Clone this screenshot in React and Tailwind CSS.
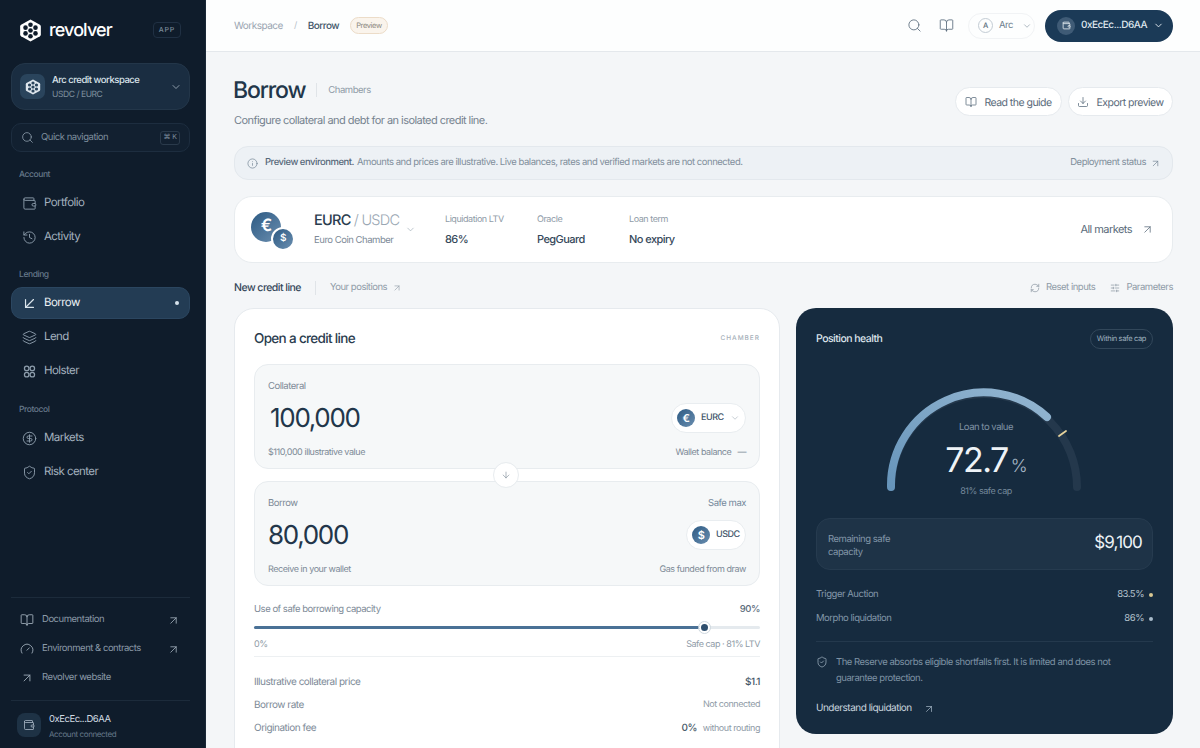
import React from 'react';
import {
  ArrowDown, ArrowDownLeft, ArrowUpRight, BookOpen, ChevronDown, CircleDollarSign, Download,
  Gauge, History, Info, Layers, RefreshCw, Search, ShieldCheck, SlidersHorizontal, Wallet,
} from 'lucide-react';

const font = { fontFamily: 'Inter, "Noto Sans", sans-serif' };

function Logo({ size = 24, fill = '#fff', hole = '#0f1c2b' }) {
  const holes = [[12, 12], [12, 6], [12, 18], [6.8, 9], [17.2, 9], [6.8, 15], [17.2, 15]];
  return (
    <svg width={size} height={size} viewBox="0 0 24 24">
      <path d="M12 .6 21.8 6a2 2 0 0 1 1 1.7v8.6a2 2 0 0 1-1 1.7L12 23.4 2.2 18a2 2 0 0 1-1-1.7V7.7a2 2 0 0 1 1-1.7Z" fill={fill} />
      {holes.map(([x, y]) => (
        <circle key={`${x}-${y}`} cx={x} cy={y} r="2.4" fill={hole} />
      ))}
    </svg>
  );
}

function HoneyGrid({ className }) {
  return (
    <svg className={className} viewBox="0 0 24 24" fill="none" stroke="currentColor" strokeWidth="2">
      <circle cx="7.5" cy="7" r="3.6" />
      <circle cx="16.5" cy="7" r="3.6" />
      <circle cx="7.5" cy="17" r="3.6" />
      <circle cx="16.5" cy="17" r="3.6" />
    </svg>
  );
}

function NavItem({ icon: Icon, label, active }) {
  return (
    <div className={`flex items-center h-[32px] rounded-[11px] pl-[10px] pr-[9px] ml-[11px] mr-[15px] border ${active ? 'bg-[#233c54] border-[#2b4660] text-[#eef3f7]' : 'border-transparent text-[#a4b2bf]'}`}>
      <span className="w-[23px] flex"><Icon className={active ? 'w-[19px] h-[19px] -ml-[2px] text-[#dbe5ec] shrink-0' : 'w-[15px] h-[15px] text-[#8c9cab]'} strokeWidth={1.5} /></span>
      <span className="text-[11.5px] font-normal ml-[-1px]">{label}</span>
      {active && <span className="ml-auto mr-[1px] w-[4px] h-[4px] rounded-full bg-[#d7e3ec]" />}
    </div>
  );
}

function FootLink({ icon: Icon, label, arrow }) {
  return (
    <div className="flex items-center h-[29px] pl-[20px] pr-[25px] pt-[1px] text-[#8b9aa8]">
      <Icon className="w-[14px] h-[14px] text-[#a2b0bd]" strokeWidth={1.5} />
      <span className="ml-[8px] text-[9.5px] font-normal">{label}</span>
      {arrow && <ArrowUpRight className="ml-auto w-[13px] h-[13px] text-[#a2b0bd]" strokeWidth={1.5} />}
    </div>
  );
}

function Sidebar() {
  return (
    <aside className="w-[206px] shrink-0 h-full bg-[#0f1c2b] border-r border-[#1a2837] flex flex-col">
      <div className="flex items-center h-[30px] mt-[15px] pl-[19px] pr-[24px]">
        <Logo size={23} />
        <span className="ml-[7px] text-[18px] font-medium text-white">revolver</span>
        <span className="ml-auto border border-[#203043] rounded-[4px] px-[5px] h-[16px] flex items-center text-[7px] tracking-[0.8px]! text-[#7b8b9a] font-medium">APP</span>
      </div>
      <div className="ml-[11px] mr-[15px] mt-[18px] h-[47px] rounded-[14px] bg-[#1a2d41] border border-[#233649] flex items-center pl-[8px] pr-[7px]">
        <span className="w-[25px] h-[25px] rounded-[7px] bg-[#2a445c] flex items-center justify-center"><Logo size={16} fill="#dfe7ee" hole="#2a445c" /></span>
        <div className="ml-[7px] pt-[2px] flex-1 leading-none">
          <div className="text-[9.5px] font-medium text-[#dbe4eb] mb-[6px]">Arc credit workspace</div>
          <div className="text-[8.5px] text-[#7f909f]">USDC / EURC</div>
        </div>
        <ChevronDown className="w-[12px] h-[12px] text-[#a7b5c2]" strokeWidth={1.6} />
      </div>
      <div className="ml-[11px] mr-[15px] mt-[13px] h-[29px] rounded-[10px] border border-[#1d2d3f] bg-[#122030] flex items-center pl-[9px] pr-[9px]">
        <Search className="w-[13px] h-[13px] text-[#8c9cab]" strokeWidth={1.5} />
        <span className="ml-[7px] pt-[2px] text-[9.5px] text-[#7f8f9e]">Quick navigation</span>
        <span className="ml-auto h-[14px] w-[20px] rounded-[3px] border border-[#2a3a4b] flex items-center justify-center gap-[2px] text-[7px] text-[#7f8f9e]"><span>⌘</span><span>K</span></span>
      </div>

      <div className="pl-[19px] mt-[18px] mb-[7px] text-[8.5px] leading-[10px] font-medium text-[#66788a]">Account</div>
      <div className="flex flex-col gap-[2px]">
        <NavItem icon={Wallet} label="Portfolio" />
        <NavItem icon={History} label="Activity" />
      </div>
      <div className="pl-[19px] mt-[17px] mb-[7px] text-[8.5px] leading-[10px] font-medium text-[#66788a]">Lending</div>
      <div className="flex flex-col gap-[2px]">
        <NavItem icon={ArrowDownLeft} label="Borrow" active />
        <NavItem icon={Layers} label="Lend" />
        <NavItem icon={HoneyGrid} label="Holster" />
      </div>
      <div className="pl-[19px] mt-[18px] mb-[7px] text-[8.5px] leading-[10px] font-medium text-[#66788a]">Protocol</div>
      <div className="flex flex-col gap-[2px]">
        <NavItem icon={CircleDollarSign} label="Markets" />
        <NavItem icon={ShieldCheck} label="Risk center" />
      </div>

      <div className="mt-auto ml-[11px] mr-[15px] border-t border-[#1c2b3b]" />
      <div className="pt-[7px] pb-[8px]">
        <FootLink icon={BookOpen} label="Documentation" arrow />
        <FootLink icon={Gauge} label="Environment & contracts" arrow />
        <FootLink icon={ArrowUpRight} label="Revolver website" />
      </div>
      <div className="ml-[11px] mr-[15px] border-t border-[#1c2b3b]" />
      <div className="flex items-center h-[47px] pl-[17px]">
        <span className="w-[24px] h-[24px] rounded-[8px] bg-[#1e3245] flex items-center justify-center"><Wallet className="w-[12px] h-[12px] text-[#a9b8c6]" strokeWidth={1.6} /></span>
        <div className="ml-[8px] pt-[4px] leading-none">
          <div className="text-[9.5px] font-normal text-[#d0dae2] mb-[6px]">0xEcEc...D6AA</div>
          <div className="text-[8px] text-[#66788a]">Account connected</div>
        </div>
      </div>
    </aside>
  );
}

function Header() {
  return (
    <header className="h-[52px] shrink-0 bg-[#fdfefe] border-b border-[#e4e8ec] flex items-center pl-[28px] pr-[27px]">
      <span className="pt-[1px] text-[10px] text-[#9aa5b1]">Workspace</span>
      <span className="mx-[11px] text-[9px] text-[#b6bfc8]">/</span>
      <span className="pt-[1px] text-[10px] font-medium text-[#43566a]">Borrow</span>
      <span className="ml-[11px] h-[17px] px-[5px] flex items-center rounded-full border border-[#ecdcc8] bg-[#faf4ec] text-[7.5px] text-[#8d8a80]">Preview</span>
      <Search className="ml-auto w-[15px] h-[15px] text-[#5f7080]" strokeWidth={1.4} />
      <BookOpen className="ml-[17px] w-[15px] h-[15px] text-[#5f7080]" strokeWidth={1.4} />
      <div className="ml-[14px] h-[26px] w-[67px] rounded-full border border-[#f1f3f5] flex items-center">
        <span className="ml-[9px] w-[15px] h-[15px] rounded-full border border-[#c3ccd4] flex items-center justify-center text-[7.5px] font-medium text-[#5f7080] shrink-0">A</span>
        <span className="ml-[6px] pt-[2px] text-[9.5px] text-[#6f7f8e]">Arc</span>
        <ChevronDown className="ml-[9px] w-[10px] h-[10px] text-[#8a98a5] shrink-0" strokeWidth={1.6} />
      </div>
      <div className="ml-[10px] w-[128px] h-[32px] rounded-full bg-[#1b3a57] flex items-center pl-[12px]">
        <span className="w-[18px] h-[18px] rounded-full bg-[#3f5b76] flex items-center justify-center"><Wallet className="w-[9px] h-[9px] text-[#e4ebf1]" strokeWidth={2.2} /></span>
        <span className="ml-[6px] text-[10px] font-medium text-[#dfe7ee]">0xEcEc...D6AA</span>
        <ChevronDown className="ml-[6px] w-[11px] h-[11px] text-[#e4ebf1]" strokeWidth={2} />
      </div>
    </header>
  );
}

function Pill({ icon: Icon, label, className }) {
  return (
    <div className={`h-[29px] rounded-full bg-white border border-[#e6eaee] flex items-center justify-center ${className}`}>
      <Icon className="w-[12px] h-[12px] text-[#566879]" strokeWidth={1.5} />
      <span className="ml-[7px] pt-[2px] text-[10.5px] font-normal text-[#596a7a]">{label}</span>
    </div>
  );
}

function Coin({ symbol, size = 18, text = 'text-[11px]', className = '' }) {
  return (
    <span
      className={`rounded-full bg-gradient-to-br from-[#2c5a83] to-[#6b8fb0] flex items-center justify-center text-white font-semibold shrink-0 ${text} ${className}`}
      style={{ width: size, height: size }}
    >
      {symbol}
    </span>
  );
}

function MarketStat({ label, value, className }) {
  return (
    <div className={`leading-none ${className}`}>
      <div className="text-[9px] text-[#8f9ba7] mb-[10px]">{label}</div>
      <div className="text-[11px] font-medium text-[#35485a]">{value}</div>
    </div>
  );
}

function TokenPill({ symbol, label, chevron, className }) {
  return (
    <div className={`h-[30px] rounded-full bg-white border border-[#e9edf0] flex items-center pl-[5px] ${className}`}>
      <Coin symbol={symbol} size={18} text="text-[11px]" />
      <span className="ml-[6px] text-[9px] font-medium text-[#43566a]">{label}</span>
      {chevron && <ChevronDown className="ml-[6px] w-[10px] h-[10px] text-[#a5b0ba]" strokeWidth={1.5} />}
    </div>
  );
}

function AssetBox({ label, right, amount, amountClass, token, footLeft, footRight }) {
  return (
    <div className="h-[105px] rounded-[14px] bg-[#f6f8f9] border border-[#e8ecef] px-[13px] pt-[16px]">
      <div className="flex justify-between leading-[12px] text-[9.5px] text-[#7d8a97]">
        <span>{label}</span>
        {right}
      </div>
      <div className="flex items-center justify-between mt-[6px] h-[38px]">
        <span className={`text-[26px] font-normal text-[#22364a] ${amountClass}`}>{amount}</span>
        {token}
      </div>
      <div className="flex justify-between mt-[10px] leading-[12px] text-[9px] text-[#7d8a97]">
        <span>{footLeft}</span>
        {footRight}
      </div>
    </div>
  );
}

function BorrowCard() {
  return (
    <section className="bg-white border border-[#e6eaee] rounded-t-[20px] px-[19px] pt-[22px] h-[460px]">
      <div className="flex items-center justify-between h-[16px]">
        <h2 className="text-[13.5px] font-medium text-[#2a3c4e]">Open a credit line</h2>
        <span className="text-[6.5px] font-medium tracking-[1px]! text-[#a5afb9]">CHAMBER</span>
      </div>
      <div className="mt-[17px] relative flex flex-col gap-[12px]">
        <AssetBox
          label="Collateral"
          amount="100,000"
          amountClass="ml-[2px]"
          token={<TokenPill symbol="€" label="EURC" chevron className="w-[75px]" />}
          footLeft="$110,000 illustrative value"
          footRight={<span>Wallet balance <span className="ml-[4px]">—</span></span>}
        />
        <AssetBox
          label="Borrow"
          right={<span className="text-[#74889b]">Safe max</span>}
          amount="80,000"
          token={<TokenPill symbol="$" label="USDC" className="w-[60px]" />}
          footLeft="Receive in your wallet"
          footRight={<span>Gas funded from draw</span>}
        />
        <span className="absolute left-[240px] top-[99px] w-[24px] h-[24px] rounded-full bg-white border-[3px] border-white outline outline-1 outline-[#e8ecef] flex items-center justify-center">
          <ArrowDown className="w-[10px] h-[10px] text-[#7d8a97]" strokeWidth={1.5} />
        </span>
      </div>

      <div className="mt-[18px] flex justify-between leading-[12px] text-[9.5px] text-[#7d8a97]">
        <span>Use of safe borrowing capacity</span>
        <span className="font-medium text-[#5c6c7b]">90%</span>
      </div>
      <div className="relative mt-[10px] h-[3px] rounded-full bg-[#e5eaee]">
        <div className="h-full rounded-full bg-[#4a7196]" style={{ width: '90%' }} />
        <span className="absolute left-[445px] top-[-4px] w-[11px] h-[11px] rounded-full bg-[#2f4f6e] border-[2px] border-white outline outline-1 outline-[#cfd8df]" />
      </div>
      <div className="mt-[10px] flex justify-between leading-[12px] text-[9px] text-[#8f9ba7]">
        <span>0%</span>
        <span>Safe cap · 81% LTV</span>
      </div>
      <div className="mt-[5px] border-t border-[#edf0f2]" />
      <div className="mt-[19px] flex flex-col gap-[11px] text-[10px] leading-[12px] text-[#7d8a97]">
        <div className="flex justify-between">
          <span>Illustrative collateral price</span>
          <span className="font-medium text-[#475868]">$1.1</span>
        </div>
        <div className="flex justify-between">
          <span>Borrow rate</span>
          <span className="text-[9px] text-[#8f9ba7]">Not connected</span>
        </div>
        <div className="flex justify-between">
          <span>Origination fee</span>
          <span className="text-[9px] text-[#8f9ba7]"><span className="text-[10px] font-medium text-[#475868] mr-[6px]">0%</span>without routing</span>
        </div>
      </div>
    </section>
  );
}

function GaugeArc() {
  return (
    <svg width="204" height="112" viewBox="0 0 204 112" className="block">
      <defs>
        <linearGradient id="arc" x1="0" x2="1" y1="1" y2="0">
          <stop offset="0" stopColor="#6795bb" />
          <stop offset="1" stopColor="#94b6d1" />
        </linearGradient>
      </defs>
      <path d="M7 102 A 93 93 0 0 1 193 102" fill="none" stroke="#24384c" strokeWidth="8" strokeLinecap="round" />
      <path d="M7 102 A 93 93 0 0 1 163 32" fill="none" stroke="url(#arc)" strokeWidth="8" strokeLinecap="round" />
      <line x1="175" y1="51" x2="182" y2="46" stroke="#e6d39c" strokeWidth="1.8" strokeLinecap="round" />
    </svg>
  );
}

function HealthPanel() {
  return (
    <section className="h-[426px] rounded-[20px] bg-[#162b3f] px-[20px] pt-[21px]">
      <div className="flex items-center justify-between h-[20px]">
        <h3 className="text-[10.5px] font-medium text-[#dde5ec]">Position health</h3>
        <span className="h-[20px] px-[6px] flex items-center rounded-full border border-[#32475a] text-[7.5px] text-[#9fb0bf]">Within safe cap</span>
      </div>
      <div className="relative mt-[36px] w-[204px] h-[112px] ml-[68px]">
        <GaugeArc />
        <div className="absolute inset-x-0 top-[38px] flex flex-col items-center leading-none">
          <span className="text-[9.5px] text-[#8093a5]">Loan to value</span>
          <span className="mt-[11px] flex items-baseline text-[#eef3f7]">
            <span className="text-[34px] font-normal tracking-[-1.5px]!">72.7</span>
            <span className="ml-[3px] text-[18px] font-light text-[#a9bac8]">%</span>
          </span>
          <span className="mt-[9px] text-[9px] text-[#75899b]">81% safe cap</span>
        </div>
      </div>
      <div className="mt-[21px] h-[52px] rounded-[14px] bg-[#1e3347] border border-[#263b4f] flex items-center justify-between pl-[11px] pr-[10px]">
        <span className="w-[80px] pt-[3px] text-[9.5px] leading-[13px] text-[#8397a9]">Remaining safe capacity</span>
        <span className="text-[17px] font-normal text-[#eef3f7]">$9,100</span>
      </div>
      <div className="mt-[19px] flex flex-col gap-[12px] text-[9.5px] leading-[12px] text-[#8397a9]">
        <div className="flex items-center justify-between">
          <span>Trigger Auction</span>
          <span className="flex items-center text-[#b4c2ce]">83.5%<span className="ml-[5px] w-[4px] h-[4px] rounded-full bg-[#d9c893]" /></span>
        </div>
        <div className="flex items-center justify-between">
          <span>Morpho liquidation</span>
          <span className="flex items-center text-[#b4c2ce]">86%<span className="ml-[5px] w-[4px] h-[4px] rounded-full bg-[#a9bccb]" /></span>
        </div>
      </div>
      <div className="mt-[16px] border-t border-[#24394d]" />
      <div className="mt-[13px] flex">
        <ShieldCheck className="mt-[1px] w-[12px] h-[12px] text-[#9fb0bf] shrink-0" strokeWidth={1.5} />
        <p className="ml-[8px] text-[9.5px] leading-[16px] text-[#7f93a5] w-[300px]">The Reserve absorbs eligible shortfalls first. It is limited and does not guarantee protection.</p>
      </div>
      <div className="mt-[14px] flex items-center text-[10px] font-normal text-[#c8d4de]">
        Understand liquidation
        <ArrowUpRight className="ml-[11px] w-[12px] h-[12px] text-[#a9bac8]" strokeWidth={1.4} />
      </div>
    </section>
  );
}

export default function App() {
  return (
    <div className="h-screen w-full overflow-hidden flex bg-[#f4f6f8] antialiased [text-rendering:geometricPrecision] [&_*]:tracking-[-0.05em]" style={font}>
      <Sidebar />
      <main className="flex-1 min-w-0 flex flex-col h-full overflow-hidden">
        <Header />
        <div className="pl-[28px] pr-[27px]">
          <div className="flex justify-between h-[94px]">
            <div className="pt-[24px]">
              <div className="flex items-center h-[28px]">
                <h1 className="text-[23px] font-medium text-[#22364a] -ml-[1px]">Borrow</h1>
                <span className="mx-[11px] h-[14px] border-l border-[#e0e4e8]" />
                <span className="pt-[2px] text-[9.5px] text-[#8f9ba7]">Chambers</span>
              </div>
              <p className="mt-[8px] text-[11px] text-[#74828f]">Configure collateral and debt for an isolated credit line.</p>
            </div>
            <div className="pt-[35px] flex gap-[6px]">
              <Pill icon={BookOpen} label="Read the guide" className="w-[107px]" />
              <Pill icon={Download} label="Export preview" className="w-[105px]" />
            </div>
          </div>

          <div className="h-[34px] rounded-[14px] bg-[#edf1f5] border border-[#e3e8ed] flex items-center pl-[12px] pr-[11px] text-[9.5px]">
            <Info className="w-[11px] h-[11px] text-[#728393]" strokeWidth={1.5} />
            <span className="ml-[7px] pt-[1px] font-medium text-[#566879]">Preview environment.</span>
            <span className="ml-[3px] pt-[1px] text-[#808e9b]">Amounts and prices are illustrative. Live balances, rates and verified markets are not connected.</span>
            <span className="ml-auto pt-[1px] text-[#808e9b]">Deployment status</span>
            <ArrowUpRight className="ml-[4px] w-[11px] h-[11px] text-[#728393]" strokeWidth={1.5} />
          </div>

          <div className="mt-[16px] h-[67px] rounded-[18px] bg-white border border-[#e8ecef] flex items-center pl-[16px] pr-[18px]">
            <div className="relative w-[42px] h-[36px] shrink-0">
              <Coin symbol="€" size={30} text="text-[17px]" />
              <Coin symbol="$" size={20} text="text-[10px]" className="absolute left-[20px] top-[15px] border-2 border-white box-content" />
            </div>
            <div className="ml-[21px] w-[85px] leading-none">
              <div className="text-[14.5px] font-medium text-[#2a3c4e] whitespace-nowrap">EURC <span className="font-light text-[#9aa7b3]">/ USDC</span></div>
              <div className="mt-[7px] text-[9.5px] text-[#7d8a97] whitespace-nowrap">Euro Coin Chamber</div>
            </div>
            <ChevronDown className="ml-[6px] w-[11px] h-[11px] text-[#9aa7b3]" strokeWidth={1.4} />
            <MarketStat label="Liquidation LTV" value="86%" className="ml-[29px] w-[92px]" />
            <MarketStat label="Oracle" value="PegGuard" className="w-[92px]" />
            <MarketStat label="Loan term" value="No expiry" />
            <span className="ml-auto text-[11px] font-normal text-[#596a7a]">All markets</span>
            <ArrowUpRight className="ml-[9px] w-[13px] h-[13px] text-[#596a7a]" strokeWidth={1.4} />
          </div>

          <div className="h-[45px] pt-[5px] flex items-center">
            <span className="text-[10.5px] font-medium text-[#34475a]">New credit line</span>
            <span className="mx-[14px] h-[14px] border-l border-[#e0e4e8]" />
            <span className="text-[9.5px] text-[#8f9ba7]">Your positions</span>
            <ArrowUpRight className="ml-[5px] w-[10px] h-[10px] text-[#8f9ba7]" strokeWidth={1.5} />
            <RefreshCw className="ml-auto w-[10px] h-[10px] text-[#7d8a97]" strokeWidth={1.5} />
            <span className="ml-[6px] text-[9.5px] text-[#8f9ba7]">Reset inputs</span>
            <SlidersHorizontal className="ml-[15px] w-[10px] h-[10px] text-[#7d8a97]" strokeWidth={1.5} />
            <span className="ml-[6px] text-[9.5px] text-[#8f9ba7]">Parameters</span>
          </div>

          <div className="grid grid-cols-[546px_377px] gap-[16px]">
            <BorrowCard />
            <HealthPanel />
          </div>
        </div>
      </main>
    </div>
  );
}
